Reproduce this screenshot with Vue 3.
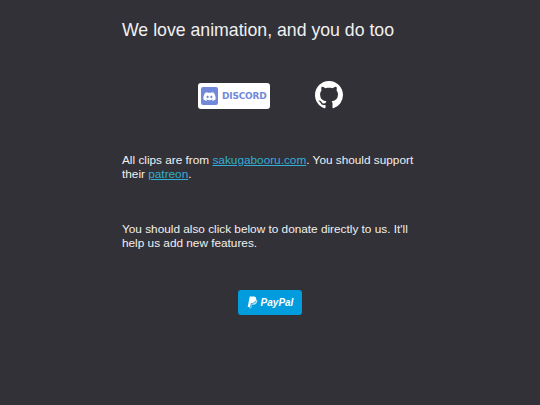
<script setup>
</script>

<template>
  <main class="page">
    <h1 class="title">We love animation, and you do too</h1>
    <div class="socials">
      <a class="discord" href="#">
        <span class="discord-icon">
          <svg viewBox="0 0 24 24" width="13" height="13"><path fill="#fff" d="M20 5.300A18 18 0 0 0 15.600 4l-.6 1.200a16 16 0 0 0-6 0L8.400 4A18 18 0 0 0 4 5.300C1.200 9.500.4 13.600.8 17.600a18 18 0 0 0 5.400 2.700l1.100-1.800-1.700-.9.400-.3a12.800 12.800 0 0 0 12 0l.4.300-1.700.9 1.100 1.800a18 18 0 0 0 5.400-2.700c.5-4.600-.8-8.700-3.200-12.300zM8.500 15.200c-1.100 0-2-1-2-2.200s.9-2.200 2-2.200 2 1 2 2.200-.9 2.200-2 2.200zm7 0c-1.100 0-2-1-2-2.200s.9-2.200 2-2.200 2 1 2 2.200-.9 2.200-2 2.200z"/></svg>
        </span>
        <span class="discord-text">DISCORD</span>
      </a>
      <a class="github" href="#">
        <svg viewBox="0 0 16 16" width="28" height="28"><path fill="#fff" d="M8 0C3.580 0 0 3.580 0 8c0 3.540 2.290 6.530 5.470 7.590.4.070.55-.17.55-.38 0-.19-.01-.82-.01-1.490-2.010.37-2.530-.49-2.690-.94-.09-.23-.48-.94-.82-1.130-.28-.15-.68-.52-.01-.53.63-.01 1.080.58 1.230.82.720 1.210 1.870.87 2.330.66.070-.52.280-.87.510-1.070-1.780-.2-3.640-.89-3.640-3.950 0-.87.310-1.590.820-2.150-.08-.2-.36-1.020.08-2.120 0 0 .67-.21 2.200.82.640-.18 1.320-.27 2-.27s1.360.09 2 .27c1.530-1.040 2.200-.82 2.200-.82.44 1.100.16 1.920.08 2.120.51.560.82 1.270.82 2.150 0 3.070-1.870 3.750-3.650 3.950.29.250.54.730.54 1.480 0 1.070-.01 1.930-.01 2.200 0 .21.150.46.550.38A8.010 8.010 0 0 0 16 8c0-4.420-3.580-8-8-8z"/></svg>
      </a>
    </div>
    <p class="copy first">All clips are from <a href="#">sakugabooru.com</a>. You should support their <a href="#">patreon</a>.</p>
    <p class="copy second">You should also click below to donate directly to us. It'll help us add new features.</p>
    <div class="donate">
      <a class="paypal" href="#">
        <svg viewBox="0 0 24 28" width="11" height="13"><path fill="#fff" opacity=".75" d="M20 7c.9 5-2.500 9-7.500 9H10l-1.500 9H4.500l-.3 1.500h5l1.200-7.500h3c5 0 8.500-3 9-7.500.300-2-.5-3.700-2.400-4.500z"/><path fill="#fff" d="M6 1h8c4 0 6.500 2 6 6-.6 5-4 8-9 8H8.500L7 24H1.500z"/></svg>
        <span class="paypal-text">PayPal</span>
      </a>
    </div>
  </main>
</template>

<style scoped>
.page {
  width: 296px;
  margin: 0 auto;
  padding-top: 19px;
  font-family: "Liberation Sans", Arial, sans-serif;
  color: #f0f0f0;
}
.title {
  margin: 0;
  font-size: 17.7px;
  font-weight: 400;
  line-height: 22px;
}
.socials {
  margin-top: 39px;
  display: flex;
  justify-content: center;
  align-items: center;
  gap: 45px;
  height: 30px;
  padding-left: 1px;
}
.discord {
  width: 72px;
  height: 26px;
  margin-top: 2px;
  box-sizing: border-box;
  background: #fff;
  border-radius: 3px;
  display: flex;
  align-items: center;
  gap: 4px;
  padding-left: 3px;
  text-decoration: none;
}
.discord-icon {
  width: 17px;
  height: 18px;
  background: #7289da;
  border-radius: 2px;
  display: flex;
  align-items: center;
  justify-content: center;
}
.discord-text {
  font-family: "DejaVu Sans", sans-serif;
  font-weight: 700;
  font-size: 9px;
  letter-spacing: -0.2px;
  color: #7289da;
}
.github {
  display: flex;
}
.copy {
  margin: 0;
  font-size: 11.8px;
  line-height: 14px;
}
.copy a {
  color: #33aed4;
}
.first {
  margin-top: 43px;
}
.second {
  margin-top: 41px;
}
.donate {
  margin-top: 40px;
  display: flex;
  justify-content: center;
}
.paypal {
  width: 64px;
  height: 25px;
  background: #009cde;
  border-radius: 3px;
  display: flex;
  align-items: center;
  justify-content: center;
  gap: 3px;
  text-decoration: none;
}
.paypal-text {
  font-family: "Liberation Sans", sans-serif;
  font-weight: 700;
  font-style: italic;
  font-size: 10px;
  color: #fff;
}
</style>

<style>
html, body {
  margin: 0;
  background: #323137;
}
</style>
